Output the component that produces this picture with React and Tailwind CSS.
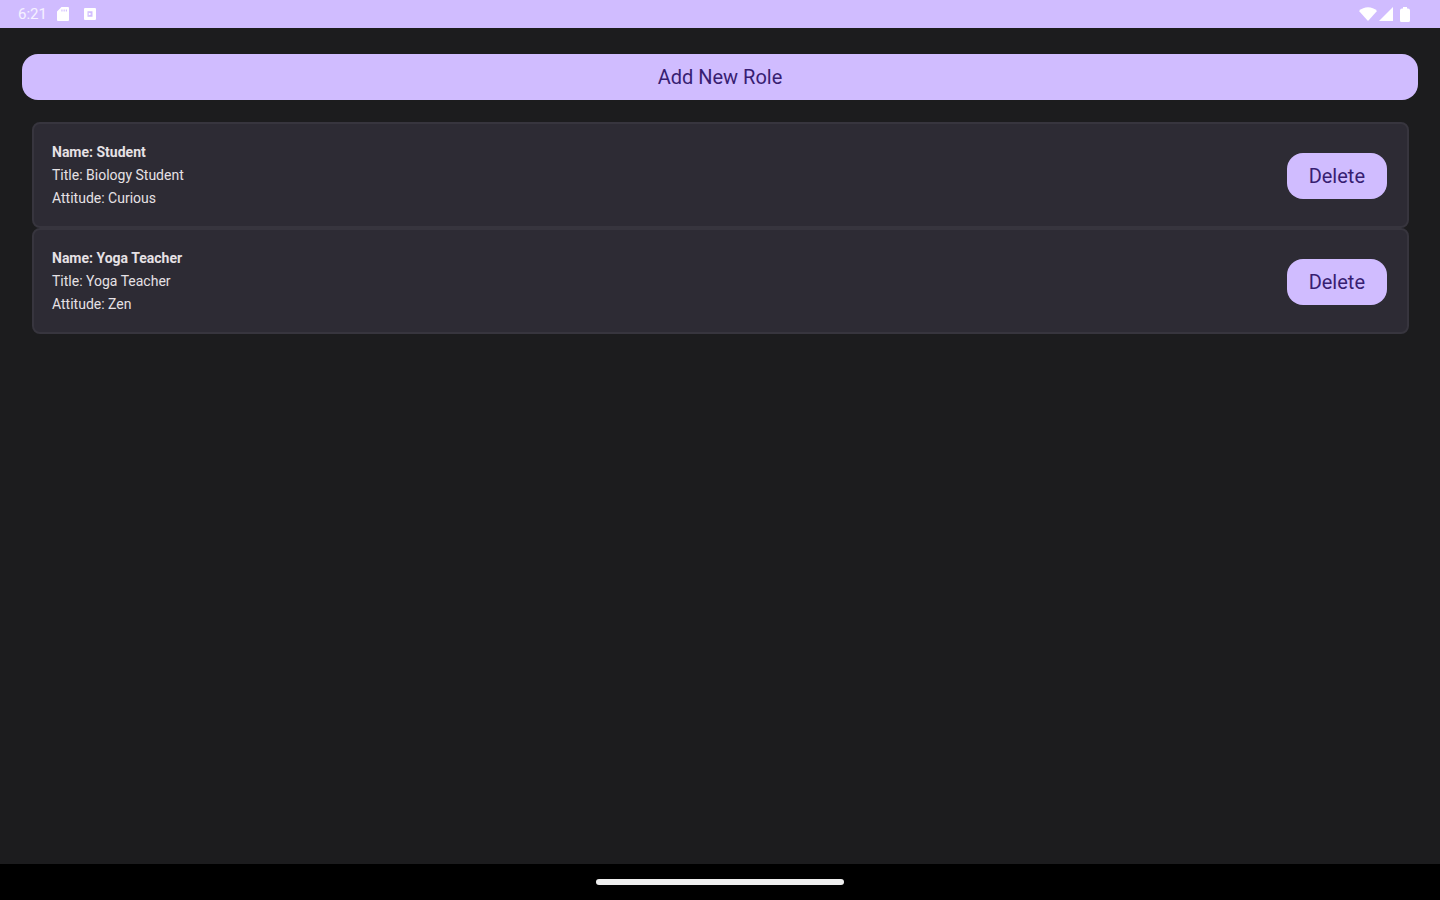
const ROLES = [
  { id: 1, name: 'Student', title: 'Biology Student', attitude: 'Curious' },
  { id: 2, name: 'Yoga Teacher', title: 'Yoga Teacher', attitude: 'Zen' },
]

function StatusBar() {
  return (
    <header className="flex h-7 shrink-0 items-center justify-between bg-[#d0bcff] pr-[30px] pl-[18px] text-white">
      <div className="flex items-center">
        <span className="w-[39px] text-[15px] text-white/80">6:21</span>
        <svg className="mr-[15px]" width="12" height="14" viewBox="0 0 12 14" fill="currentColor">
          <path fillRule="evenodd" d="M4.5 0H11a1 1 0 0 1 1 1v12a1 1 0 0 1-1 1H1a1 1 0 0 1-1-1V4.5zM4.4 2.6v2h1.1v-2zM6.6 2.6v2h1.1v-2zM8.8 2.6v2h1.1v-2z" />
        </svg>
        <svg width="12" height="12" viewBox="0 0 12 12" fill="currentColor">
          <path fillRule="evenodd" d="M1 0h10a1 1 0 0 1 1 1v10a1 1 0 0 1-1 1H1a1 1 0 0 1-1-1V1a1 1 0 0 1 1-1zM3.5 3.2v5.6h5V3.2zM4.7 4.4L7.6 6 4.7 7.6z" />
        </svg>
      </div>
      <div className="flex items-center gap-[2px]">
        <svg width="18" height="14" viewBox="0 0 18 14" fill="currentColor">
          <path d="M0 4C5-1 13-1 18 4L9 14z" />
        </svg>
        <svg width="14" height="14" viewBox="0 0 14 14" fill="currentColor">
          <path d="M14 0v14H0z" />
        </svg>
        <svg className="ml-[5px]" width="10" height="15" viewBox="0 0 10 15" fill="currentColor">
          <path d="M3 0h4v1.4h1a2 2 0 0 1 2 2V13.500a1.500 1.500 0 0 1-1.500 1.500h-7A1.500 1.500 0 0 1 0 13.500V3.400a2 2 0 0 1 2-2h1z" />
        </svg>
      </div>
    </header>
  )
}

function RoleCard({ role }) {
  return (
    <li className="flex items-center justify-between rounded-lg border-2 border-[#37353e] bg-[#2d2b34] pt-[17px] pr-5 pb-4 pl-[18px]">
      <div className="text-sm leading-[23px] text-[#e6e1e5]">
        <p className="font-bold">Name: {role.name}</p>
        <p>Title: {role.title}</p>
        <p>Attitude: {role.attitude}</p>
      </div>
      <button type="button" className="h-[46px] rounded-2xl bg-[#d0bcff] px-[22px] text-xl text-[#381e72]">
        Delete
      </button>
    </li>
  )
}

export default function App() {
  return (
    <div className="flex min-h-screen flex-col bg-[#1c1c1e] font-['Roboto',sans-serif]">
      <StatusBar />

      <main className="flex flex-1 flex-col px-[22px] pt-[26px]">
        <button type="button" className="h-[46px] rounded-2xl bg-[#d0bcff] text-xl text-[#381e72]">
          Add New Role
        </button>
        <ul className="mt-[22px] pr-[9px] pl-[10px]">
          {ROLES.map((role) => (
            <RoleCard key={role.id} role={role} />
          ))}
        </ul>
      </main>

      <footer className="flex h-9 shrink-0 items-center justify-center bg-black">
        <div className="h-[6px] w-[248px] rounded-full bg-[#eeeeee]" />
      </footer>
    </div>
  )
}
